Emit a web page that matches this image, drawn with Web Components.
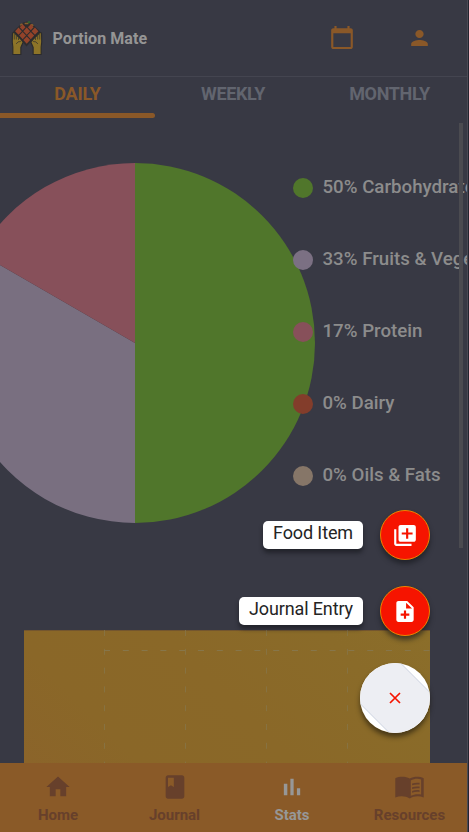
<!DOCTYPE html>
<html lang="en"><head><meta charset="utf-8"><title>Portion Mate</title>
<style>
html,body{margin:0;height:100%;overflow:hidden;background:#383944}
body{font-family:Roboto,"Liberation Sans",sans-serif}
</style></head><body>
<portion-app></portion-app>
<script>
const define=(name,html)=>customElements.define(name,class extends HTMLElement{
  constructor(){super();this.attachShadow({mode:'open'}).innerHTML=typeof html==='function'?'':html}
  connectedCallback(){if(typeof html==='function')this.shadowRoot.innerHTML=html(this)}
});
const icons={
 calendar:'<path d="M20 3h-1V1h-2v2H7V1H5v2H4c-1.100 0-2 .9-2 2v16c0 1.100.9 2 2 2h16c1.100 0 2-.9 2-2V5c0-1.100-.9-2-2-2zm0 18H4V8h16v13z"/>',
 person:'<path d="M12 12c2.210 0 4-1.790 4-4s-1.790-4-4-4-4 1.790-4 4 1.790 4 4 4zm0 2c-2.670 0-8 1.340-8 4v2h16v-2c0-2.660-5.330-4-8-4z"/>',
 home:'<path d="M10 20v-6h4v6h5v-8h3L12 3 2 12h3v8z"/>',
 book:'<path d="M18 2H6c-1.100 0-2 .9-2 2v16c0 1.100.9 2 2 2h12c1.100 0 2-.9 2-2V4c0-1.100-.9-2-2-2zM6 4h5v8l-2.500-1.500L6 12V4z"/>',
 stats:'<path d="M5 9.200h3V19H5V9.200zM10.600 5h2.800v14h-2.800V5zm5.600 8H19v6h-2.800v-6z"/>',
 library:'<path fill-rule="evenodd" d="M12.200 4.800C9 2.700 4.500 2.700 1 4.400V21c3.700-1.500 8-1.300 11.200.8 3.100-2.100 7.400-2.300 10.800-.8V4.400c-3.500-1.700-7.600-1.700-10.800.4zM21 18.500c-2.700-.7-5.600-.3-8 1V6.400c2.300-1.400 5.400-1.800 8-.9v13z"/><path d="M14 9.100c1.800-.8 3.700-1 5.800-.7v1.500c-2.100-.3-4-.1-5.800.7zm0 3.200c1.800-.8 3.700-1 5.800-.7v1.500c-2.100-.3-4-.1-5.800.7zm0 3.200c1.800-.8 3.700-1 5.800-.7v1.500c-2.100-.3-4-.1-5.800.7z"/>',
 addlib:'<path d="M4 6H2v14c0 1.100.9 2 2 2h14v-2H4V6zm16-4H8c-1.100 0-2 .9-2 2v12c0 1.100.9 2 2 2h12c1.100 0 2-.9 2-2V4c0-1.100-.9-2-2-2zm-1 9h-4v4h-2v-4H9V9h4V5h2v4h4v2z"/>',
 addfile:'<path d="M14 2H6c-1.100 0-2 .9-2 2v16c0 1.100.9 2 2 2h12c1.100 0 2-.9 2-2V8l-6-6zm2 14h-3v3h-2v-3H8v-2h3v-3h2v3h3v2zm-3-7V3.500L18.500 9H13z"/>'
};
define('pm-icon',el=>`<style>:host{display:block;flex:none}svg{display:block;width:100%;height:100%;fill:currentColor}</style><svg viewBox="0 0 24 24" preserveAspectRatio="none">${icons[el.getAttribute('name')]}</svg>`);

define('pm-logo',`<style>:host{display:block;width:34px;height:36px}svg{display:block}</style>
<svg width="34" height="36" viewBox="0 0 36 36" preserveAspectRatio="none">
<path d="M3.500 11.500L10 5.500l4-3 4-1 5.500 2.500 8.500 7.500-14.500 15z" fill="#2d2c2e"/>
<path d="M11 5.500q1-2 2.500-1M15.500 3.500h4M22 5q1.500-1 2.500 1" stroke="#8a5f2c" stroke-width="1.400" fill="none"/>
<g fill="#93432a"><path d="M9 7.600l3.600 3.600L9 14.800l-3.600-3.600zM17.700 7.600l3.600 3.600-3.600 3.600-3.600-3.600zM26.400 7.600l3.600 3.600-3.600 3.600-3.600-3.600zM13.400 12l3.600 3.600-3.600 3.600L9.800 15.600zM22 12l3.600 3.600-3.600 3.600-3.600-3.600zM17.700 16.500l3.600 3.600-3.600 3.600-3.600-3.600zM13.400 4.200l3 3-3 3-3-3zM22 4.200l3 3-3 3-3-3z"/></g>
<path d="M18 2.500l2-1.500 2 .8-1.600 1.700z" fill="#31652c"/>
<g fill="#8d7428" stroke="#2b2b2c" stroke-width="1.200"><path d="M2.600 13l2-.5 1.800 2 5 4.500 2.600 3-2.500 5.500v7H3V27l-.6-5z"/><path d="M33.400 13l-2-.5-1.800 2-5 4.500-2.600 3 2.500 5.500v7H33v-7.500l.6-5z"/></g>
<g stroke="#423b2a" stroke-width=".9" fill="none"><path d="M4.500 13.500v6M6.700 15v4.500M9 17v3M31.500 13.500v6M29.300 15v4.500M27 17v3M6.500 24q1.500-3 5-2.500M29.500 24q-1.500-3-5-2.500"/></g>
</svg>`);

define('pm-header',`<style>
:host{display:flex;align-items:center;height:76px;border-bottom:1px solid #444550;padding:0 35px 0 10px;color:#8a5828}
h1{margin:1px auto 0 8.500px;font-size:16px;line-height:24px;font-weight:700;color:#959595;letter-spacing:.08px}
.c{width:26px;height:25px;margin-right:52px;margin-top:-1px}.p{width:25px;height:24px;margin-top:-1px}
</style><pm-logo></pm-logo><h1>Portion Mate</h1><pm-icon class="c" name="calendar"></pm-icon><pm-icon class="p" name="person"></pm-icon>`);

define('pm-tab',`<style>:host{display:flex;flex-direction:column;justify-content:space-between;align-items:center;height:41px;color:#62656f;font-weight:700;font-size:18px;line-height:34px;letter-spacing:-.35px}
i{display:none;height:5px;width:100%;border-radius:0 3px 3px 0;background:#8a5828}:host([active]){color:#8a5828;letter-spacing:-.2px}:host([active]) i{display:block}</style><span><slot></slot></span><i></i>`);
define('pm-tabs',`<style>:host{display:grid;grid-template-columns:155px 156px 157px}</style><pm-tab active>DAILY</pm-tab><pm-tab>WEEKLY</pm-tab><pm-tab>MONTHLY</pm-tab>`);

define('pm-pie',`<style>:host{display:block;width:315px;flex:none;height:360px}svg{display:block}</style>
<svg width="315" height="360" viewBox="0 0 315 360"><path fill="#50762b" d="M135 0a180 180 0 0 1 0 360z"/><path fill="#796f80" d="M135 180v180A180 180 0 0 1-20.900 90z"/><path fill="#87505a" d="M135 180L-20.900 90A180 180 0 0 1 135 0z"/></svg>`);
define('pm-key',el=>`<style>:host{display:flex;align-items:center;gap:10px;height:24px;white-space:nowrap;font-size:18.700px;font-weight:500;line-height:24px;color:#8c8c8c}
i{width:20px;height:20px;flex:none;border-radius:50%;background:${el.getAttribute('color')};margin-top:2px}</style><i></i><span><slot></slot></span>`);
define('pm-stats',`<style>:host{display:flex;height:426px;box-sizing:border-box;padding-top:45px}
.l{display:grid;gap:48px;align-content:start;padding-top:12px;margin-left:-22.500px;min-width:0}</style>
<pm-pie></pm-pie><div class="l"><pm-key color="#50762b">50% Carbohydrates</pm-key><pm-key color="#7b7083">33% Fruits &amp; Vegetables</pm-key><pm-key color="#87505a">17% Protein</pm-key><pm-key color="#833d2b">0% Dairy</pm-key><pm-key color="#867668">0% Oils &amp; Fats</pm-key></div>`);

define('pm-chart',`<style>:host{display:block;width:406px;height:133px;margin:86px 0 0 24px;background:linear-gradient(45deg,#8b642a 0%,#8a6728 22%,#8a6828 50%,#8a6b29 80%,#8b6e2a 100%)}svg{display:block}</style>
<svg width="406" height="133"><path d="M0 .5H406" stroke="#74562e"/><g stroke="#87764a" stroke-dasharray="6 12.8"><path d="M80 20.500H406"/><path opacity=".75" d="M80.500 0V133M161.500 0V133M242.500 0V133M323.500 0V133"/></g></svg>`);

define('pm-nav-item',el=>`<style>:host{display:flex;flex-direction:column;align-items:center;padding-top:10px;gap:2px;color:#67402b;font-size:15px;font-weight:700;line-height:24px}:host([active]){color:#979797}
pm-icon{width:${el.getAttribute('w')||28}px;height:28px}</style><pm-icon name="${el.getAttribute('icon')}"></pm-icon><span><slot></slot></span>`);
define('pm-nav',`<style>:host{display:grid;grid-template-columns:116px 117px 118px 117px;height:69px;background:#8a5a28}</style>
<pm-nav-item icon="home">Home</pm-nav-item><pm-nav-item icon="book">Journal</pm-nav-item><pm-nav-item icon="stats" active>Stats</pm-nav-item><pm-nav-item icon="library" w="31">Resources</pm-nav-item>`);

define('pm-action',el=>`<style>:host{display:flex;align-items:center;justify-content:flex-end;gap:17px;height:50px}
span{background:#fff;color:#242424;font-size:18px;letter-spacing:-.12px;line-height:24px;padding:0 10px 4px;border-radius:5px;box-shadow:0 4px 4px rgba(20,21,26,.6)}
b{display:grid;place-items:center;box-sizing:border-box;width:50px;height:50px;border:1px solid #ee8500;border-radius:50%;background:#f61400;color:#fff;box-shadow:0 4px 5px rgba(20,21,26,.6)}
pm-icon{width:26px;height:25px}</style><span><slot></slot></span><b><pm-icon name="${el.getAttribute('icon')}"></pm-icon></b>`);
define('pm-fab',`<style>:host{display:flex;flex-direction:column;align-items:flex-end;gap:26.200px;width:220px}
svg{display:block;border-radius:50%;box-shadow:0 4px 5px rgba(25,20,10,.6)}</style>
<pm-action icon="addlib">Food Item</pm-action><pm-action icon="addfile">Journal Entry</pm-action>
<svg width="70" height="70"><rect width="70" height="70" fill="#fff"/><path d="M-30 10.500L10-30.500 100 59.500 60 100.500z" fill="#edeef3" stroke="#cbd1df"/><path d="M30 30l10 10M40 30L30 40" stroke="#f61400" stroke-width="1.700"/></svg>`);

define('portion-app',`<style>:host{display:flex;position:relative;box-sizing:border-box;width:469px;height:832px;overflow:hidden;background:#383944}
main{display:flex;flex-direction:column;width:467px;flex:none;overflow:hidden}.e{width:2px;background:linear-gradient(90deg,#494a54 50%,#24242f 50%)}
.scroll{position:absolute;left:459px;top:123px;width:4px;height:425px;background:#4b4b50}
pm-fab{position:absolute;left:210px;top:510.200px}</style>
<main><pm-header></pm-header><pm-tabs></pm-tabs><pm-stats></pm-stats><pm-chart></pm-chart><pm-nav></pm-nav></main><div class="e"></div><div class="scroll"></div><pm-fab></pm-fab>`);
</script></body></html>
